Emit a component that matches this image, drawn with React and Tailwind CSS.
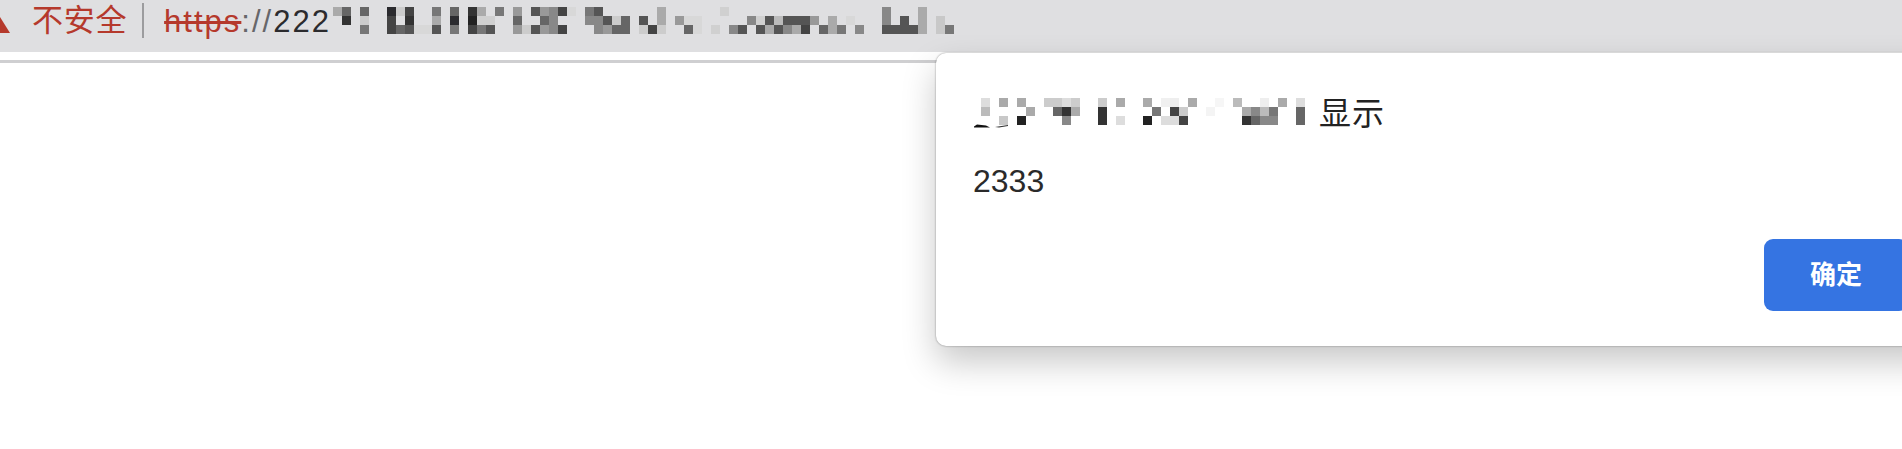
import React from 'react';

// gray values per column, three rows each. '' means no block
const urlBlocks = [
  ['#aaa', '', ''], ['#666', '#333', ''], ['', '', ''], ['#666', '#ccc', '#777'], ['', '', ''], ['', '', ''],
  ['#2a2a2e', '#444', '#444'], ['#ccc', '', '#666'], ['#444', '#333', '#555'], ['', '', '#d8d8d8'], ['', '', '#d8d8d8'],
  ['#777', '#aaa', '#555'], ['', '', ''], ['#666', '#2c2c30', '#777'], ['', '', ''], ['#333', '#222', '#444'],
  ['#aaa', '#d0d0d0', '#777'], ['', '#d0d0d0', '#555'], ['#777', '', ''], ['', '', ''], ['#999', '#666', '#999'],
  ['', '', '#ccc'], ['#555', '', '#555'], ['#999', '#666', '#999'], ['#888', '#888', '#888'], ['#444', '', '#444'],
  ['#d8d8d8', '', ''], ['', '', ''], ['#777', '#888', ''], ['#555', '#888', '#888'], ['', '#555', '#999'],
  ['', '#ccc', '#666'], ['', '#666', '#666'], ['', '', ''], ['', '#555', '#ccc'], ['', '', '#444'],
  ['#aaa', '#aaa', '#ccc'], ['', '', ''], ['', '#999', ''], ['', '#d8d8d8', '#666'], ['', '#d8d8d8', '#d8d8d8'],
  ['', '', ''], ['', '', '#d0d0d0'], ['#d0d0d0', '', ''], ['', '', '#888'], ['', '', '#555'], ['', '#888', ''],
  ['', '#d0d0d0', '#555'], ['', '#555', '#aaa'], ['', '#bbb', '#555'], ['', '#555', '#888'], ['', '#555', '#aaa'],
  ['', '#555', '#444'], ['', '#999', ''], ['', '', '#666'], ['', '#aaa', '#aaa'], ['', '', '#777'], ['', '#d8d8d8', ''],
  ['', '', '#888'], ['', '', ''], ['', '', ''], ['#888', '#888', '#555'], ['', '', '#555'], ['', '#555', '#555'],
  ['', '', '#555'], ['#aaa', '#aaa', '#aaa'], ['', '', ''], ['', '#c8c8c8', '#c8c8c8'], ['', '', '#777'],
];

const titleBlocks = [
  ['#ddd', '#bbb', ''], ['', '', ''], ['#aaa', '', '#c8c8c8'], ['', '', ''], ['#aaa', '', '#222'], ['', '#aaa', ''],
  ['', '', ''], ['#ccc', '', ''], ['#ccc', '#666', ''], ['#ddd', '#333', '#888'], ['#ccc', '#aaa', ''], ['', '', ''],
  ['', '', ''], ['#ccc', '#333', '#333'], ['', '', ''], ['#aaa', '', '#ddd'], ['', '', ''], ['', '', ''],
  ['#aaa', '', '#222'], ['', '#777', ''], ['#f0f0f0', '', '#ddd'], ['#eee', '#444', '#ddd'], ['', '#ccc', '#444'],
  ['#aaa', '', ''], ['', '', ''], ['', '#f4f4f4', ''], ['#f6f6f6', '', ''], ['', '', ''], ['#bbb', '', ''],
  ['', '#aaa', '#333'], ['', '#888', '#666'], ['#eee', '#bbb', '#888'], ['', '#777', '#888'], ['#aaa', '', ''],
  ['', '', ''], ['#ddd', '#666', '#666'],
];

function Mosaic({ blocks, className, children }) {
  return (
    <svg width={blocks.length * 9} height={27} className={className}>
      {blocks.map((col, x) =>
        col.map((fill, y) =>
          fill ? <rect key={`${x}-${y}`} x={x * 9} y={y * 9} width={9} height={9} fill={fill} /> : null
        )
      )}
      {children}
    </svg>
  );
}

export default function App() {
  return (
    <div className="relative h-[449px] w-full overflow-hidden bg-white font-['Liberation_Sans','Noto_Sans_CJK_SC',sans-serif]">
      {/* address bar */}
      <div className="flex h-[52px] items-center bg-[#dfdfe1]">
        <svg width="10" height="16" viewBox="0 0 10 16" className="mt-[-2px] shrink-0">
          <polygon points="-10,16 0,0 10,16" fill="#b5392c" />
        </svg>
        <span className="ml-[22px] mb-[11px] text-[31px] leading-none tracking-[0.7px] text-[#b5392c]">不安全</span>
        <div className="ml-[15px] mb-[12px] h-[35px] w-[2px] bg-[#9c9c9e]" />
        <div className="ml-[20px] mb-[10px] flex items-center text-[31px] leading-none tracking-[2px]">
          <span className="text-[#b5392c] line-through">https</span>
          <span className="text-[#66666a]">://</span>
          <span className="text-[#2b2b2e]">222</span>
        </div>
        <Mosaic blocks={urlBlocks} className="ml-[2px] mb-[11px] shrink-0 blur-[0.6px]" />
      </div>
      <div className="h-[11px] border-b-[3px] border-[#cfcfd1] bg-white" />

      {/* alert dialog */}
      <div className="absolute left-[936px] top-[53px] flex h-[293px] w-[1010px] flex-col rounded-[10px] bg-white pl-[37px] pr-[38px] shadow-[0_0_2px_rgba(0,0,0,0.45),0_16px_34px_rgba(0,0,0,0.22)]">
        <div className="mt-[43px] flex h-[36px] items-center text-[32px] leading-none text-[#222]">
          <Mosaic blocks={titleBlocks} className="ml-[8px] mt-[-5px] shrink-0 overflow-visible blur-[0.5px]">
            <path d="M-7 28.5 L-4 26.5 L5 27.5 L9 29.5 L-7 29.5 Z" fill="#111" />
            <path d="M14 29 L27 27 L27 28 L18 29.5 Z" fill="#333" />
          </Mosaic>
          <span className="ml-[14px] tracking-[1px]">显示</span>
        </div>
        <div className="mt-[33px] text-[32px] leading-none text-[#2a2a2a]">2333</div>
        <div className="mt-[42px] flex justify-end">
          <button className="flex h-[72px] w-[144px] items-center justify-center rounded-[9px] bg-[#3574e2] text-[26px] font-bold text-white">
            确定
          </button>
        </div>
      </div>
    </div>
  );
}
